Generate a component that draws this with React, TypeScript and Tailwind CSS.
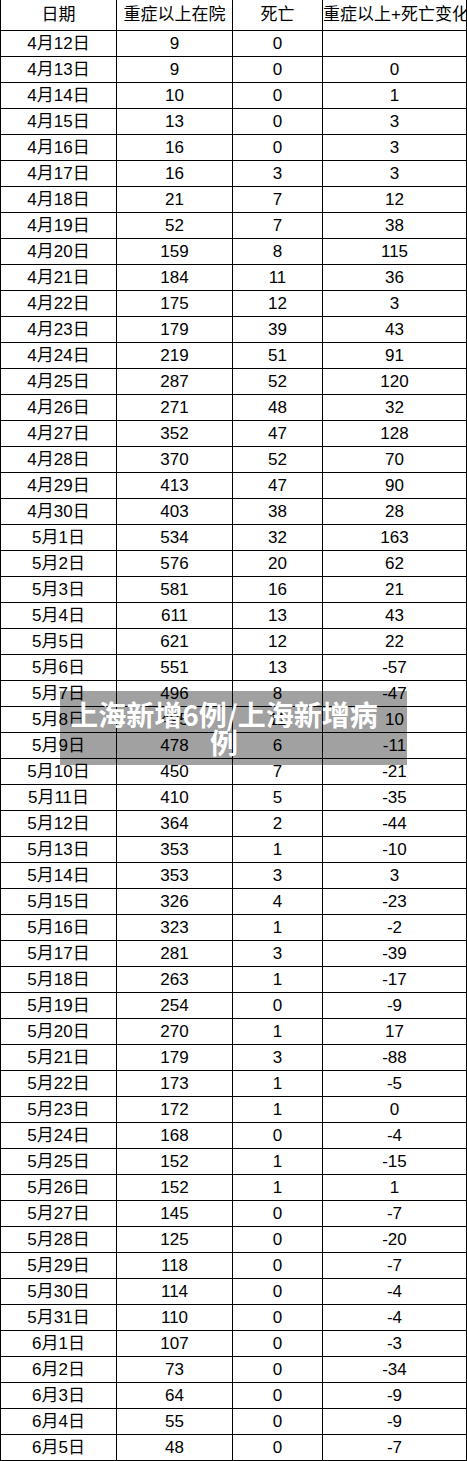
const FILAS: [string, number, number, number | null][] = [
  ["4月12日", 9, 0, null],
  ["4月13日", 9, 0, 0],
  ["4月14日", 10, 0, 1],
  ["4月15日", 13, 0, 3],
  ["4月16日", 16, 0, 3],
  ["4月17日", 16, 3, 3],
  ["4月18日", 21, 7, 12],
  ["4月19日", 52, 7, 38],
  ["4月20日", 159, 8, 115],
  ["4月21日", 184, 11, 36],
  ["4月22日", 175, 12, 3],
  ["4月23日", 179, 39, 43],
  ["4月24日", 219, 51, 91],
  ["4月25日", 287, 52, 120],
  ["4月26日", 271, 48, 32],
  ["4月27日", 352, 47, 128],
  ["4月28日", 370, 52, 70],
  ["4月29日", 413, 47, 90],
  ["4月30日", 403, 38, 28],
  ["5月1日", 534, 32, 163],
  ["5月2日", 576, 20, 62],
  ["5月3日", 581, 16, 21],
  ["5月4日", 611, 13, 43],
  ["5月5日", 621, 12, 22],
  ["5月6日", 551, 13, -57],
  ["5月7日", 496, 8, -47],
  ["5月8日", 495, 11, 10],
  ["5月9日", 478, 6, -11],
  ["5月10日", 450, 7, -21],
  ["5月11日", 410, 5, -35],
  ["5月12日", 364, 2, -44],
  ["5月13日", 353, 1, -10],
  ["5月14日", 353, 3, 3],
  ["5月15日", 326, 4, -23],
  ["5月16日", 323, 1, -2],
  ["5月17日", 281, 3, -39],
  ["5月18日", 263, 1, -17],
  ["5月19日", 254, 0, -9],
  ["5月20日", 270, 1, 17],
  ["5月21日", 179, 3, -88],
  ["5月22日", 173, 1, -5],
  ["5月23日", 172, 1, 0],
  ["5月24日", 168, 0, -4],
  ["5月25日", 152, 1, -15],
  ["5月26日", 152, 1, 1],
  ["5月27日", 145, 0, -7],
  ["5月28日", 125, 0, -20],
  ["5月29日", 118, 0, -7],
  ["5月30日", 114, 0, -4],
  ["5月31日", 110, 0, -4],
  ["6月1日", 107, 0, -3],
  ["6月2日", 73, 0, -34],
  ["6月3日", 64, 0, -9],
  ["6月4日", 55, 0, -9],
  ["6月5日", 48, 0, -7],
];

const cell = "flex items-center justify-center overflow-hidden whitespace-nowrap border-l border-black";

function Fila({ h, cols }: { h: string; cols: (string | number | null)[] }) {
  return (
    <div className={`flex border-b border-black ${h}`}>
      <div className={`${cell} w-[116px]`}>{cols[0]}</div>
      <div className={`${cell} w-[116px]`}>{cols[1]}</div>
      <div className={`${cell} w-[90px]`}>{cols[2]}</div>
      <div className={`${cell} w-[145px] border-r`}>
        <span className="w-full text-center">{cols[3]}</span>
      </div>
    </div>
  );
}

export default function App() {
  return (
    <div className="relative w-[467px] bg-white text-[17px] text-black font-['Liberation_Sans','Noto_Sans_CJK_SC',sans-serif]">
      <Fila h="h-[31px]" cols={["日期", "重症以上在院", "死亡", "重症以上+死亡变化"]} />
      {FILAS.map((f) => (
        <Fila key={f[0]} h="h-[26px]" cols={f} />
      ))}

      {/* 标题浮层 */}
      <div className="absolute left-[60px] top-[691px] flex h-[74px] w-[347px] items-center bg-black/[0.37] pr-[19px]">
        <p className="w-full text-center text-[28px] leading-[28px] font-bold text-white font-['Noto_Sans_CJK_SC',sans-serif]">
          上海新增6例/上海新增病例
        </p>
      </div>
    </div>
  );
}
